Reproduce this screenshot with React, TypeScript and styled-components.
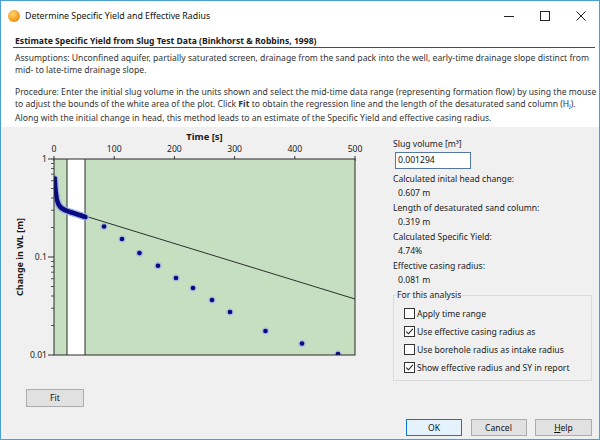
import React from "react";
import styled, { createGlobalStyle } from "styled-components";

const FONT = `"Noto Sans", "Open Sans", "DejaVu Sans", sans-serif`;

const Global = createGlobalStyle`
  html, body { margin: 0; padding: 0; background: #ffffff; }
  body { font-family: ${FONT}; font-size: 8.6px; color: #1b1b1b; }
  * { box-sizing: border-box; }
`;

const Window = styled.div`
  width: 600px;
  height: 440px;
  border: 1px solid #4a9fd5;
  background: #f0f0f0;
  display: flex;
  flex-direction: column;
  overflow: hidden;
`;

const TitleBar = styled.div`
  height: 29px;
  background: #ffffff;
  display: flex;
  align-items: center;
  padding-left: 7px;
  flex-shrink: 0;
`;

const AppIcon = styled.span`
  width: 12px;
  height: 12px;
  border-radius: 50%;
  background: radial-gradient(circle at 40% 35%, #ffd86e, #f39b20 60%, #d7720a);
  margin-right: 5px;
  flex-shrink: 0;
`;

const Title = styled.div`
  flex: 1;
  font-size: 8.8px;
  color: #111;
  white-space: nowrap;
`;

const Controls = styled.div`
  display: flex;
`;

const Ctrl = styled.div`
  width: 36px;
  height: 29px;
  display: flex;
  align-items: center;
  justify-content: center;
`;

const Header = styled.div`
  background: #ffffff;
  padding: 5px 4px 3px 12px;
  flex-shrink: 0;
`;

const Heading = styled.div`
  font-weight: 700;
  line-height: 12px;
  padding-left: 2px;
  border-bottom: 1px solid #4a4a4a;
  white-space: nowrap;
`;

const Para = styled.div<{ $gap: number }>`
  margin-top: ${(p) => p.$gap}px;
  padding-left: 2px;
  color: #333;
`;

const Line = styled.div`
  line-height: 12px;
  white-space: nowrap;
`;

const Main = styled.div`
  display: flex;
  flex-shrink: 0;
`;

const LeftCol = styled.div`
  width: 385px;
  display: flex;
  flex-direction: column;
`;

const ChartSvg = styled.svg`
  display: block;
  width: 385px;
  height: 255px;
`;

const RightCol = styled.div`
  width: 199px;
  margin-left: 7px;
  padding-top: 11px;
  display: flex;
  flex-direction: column;
`;

const FieldLabel = styled.div`
  line-height: 13px;
  white-space: nowrap;
  color: #222;
`;

const FieldValue = styled.div`
  line-height: 14px;
  margin-bottom: 2px;
  padding-left: 5px;
  color: #222;
`;

const Input = styled.div`
  margin-top: 1px;
  margin-bottom: 3.5px;
  margin-left: 2px;
  width: 76px;
  height: 17px;
  border: 1px solid #5578a3;
  background: #ffffff;
  padding-left: 2px;
  line-height: 15px;
  color: #111;
`;

const Group = styled.fieldset`
  margin: 0.5px 0 0 0;
  padding: 0 8px 3px 2px;
  border: 1px solid #dadada;
  border-radius: 0;
`;

const Legend = styled.legend`
  padding: 0 1px;
  line-height: 12px;
  color: #222;
`;

const CheckList = styled.div`
  margin-top: 3.7px;
  padding-left: 8px;
  display: flex;
  flex-direction: column;
`;

const CheckRow = styled.div`
  height: 18px;
  display: flex;
  align-items: center;
  gap: 2px;
  white-space: nowrap;
  color: #222;
`;

const Box = styled.span`
  width: 11px;
  height: 11px;
  border: 1px solid #333;
  background: #fff;
  display: flex;
  align-items: center;
  justify-content: center;
  flex-shrink: 0;
`;

const Button = styled.div<{ $w: number; $primary?: boolean }>`
  width: ${(p) => p.$w}px;
  height: 17px;
  border: 1px solid ${(p) => (p.$primary ? "#0a78d4" : "#adadad")};
  background: ${(p) => (p.$primary ? "#e5f1fb" : "#e1e1e1")};
  display: flex;
  align-items: center;
  justify-content: center;
  color: #111;
  flex-shrink: 0;
`;

const FitWrap = styled.div`
  margin-top: 7px;
  margin-left: 25px;
`;

const Footer = styled.div`
  margin-top: 12px;
  padding-right: 7px;
  display: flex;
  justify-content: flex-end;
  gap: 8.5px;
`;

const Sub = styled.sub`
  font-size: 6px;
  vertical-align: -1px;
`;

const Mnemonic = styled.span`
  text-decoration: underline;
`;

const X0 = 54;
const X1 = 355;
const Y0 = 157;
const Y1 = 353;
const tx = (t: number) => X0 + ((X1 - X0) * t) / 500;
const ly = (v: number) => Y0 + ((Y1 - Y0) / 2) * -Math.log10(v);

const cluster: [number, number][] = [
  [54.8, 176.5], [55, 179], [55.2, 182], [55.4, 185], [55.7, 188], [56, 191], [56.3, 193.5],
  [56.7, 196], [57.2, 198.5], [57.8, 200.5], [58.5, 202.2], [59.3, 203.6], [60.2, 204.8],
  [61.2, 205.8], [62.3, 206.6], [63.5, 207.3], [64.7, 207.9], [66, 208.5], [67.3, 209],
  [68.6, 209.5], [70, 210], [71.4, 210.4], [72.8, 210.9], [74.2, 211.3], [75.6, 211.8],
  [77, 212.2], [78.4, 212.7], [79.8, 213.1], [81.2, 213.6], [82.6, 214.1], [84, 214.6],
  [85.4, 215.1],
];

const later: [number, number][] = [
  [104, 224.5], [122, 237], [139.5, 251], [158, 263.7], [176, 276], [193, 286],
  [212, 298], [230, 310], [265.5, 329], [302, 341.5], [338, 352],
];

const Chart: React.FC = () => {
  const minor: number[] = [];
  [0.01, 0.1].forEach((d) => {
    for (let k = 2; k <= 9; k++) minor.push(ly(d * k));
  });
  const pts = [...cluster, ...later];
  return (
    <ChartSvg viewBox="1 125 385 255">
      <defs>
        <clipPath id="plotclip">
          <rect x={X0} y={Y0} width={X1 - X0} height={Y1 - Y0} />
        </clipPath>
      </defs>
      <text x={204.5} y={138} textAnchor="middle" fontFamily={FONT} fontSize="9.4" fontWeight="700" fill="#1a1a1a">
        Time [s]
      </text>
      {[0, 100, 200, 300, 400, 500].map((t) => (
        <g key={t}>
          <text x={tx(t)} y={150} textAnchor="middle" fontFamily={FONT} fontSize="8.6" fill="#222">
            {t}
          </text>
          <line x1={tx(t)} x2={tx(t)} y1={154} y2={159} stroke="#333" strokeWidth="1" />
        </g>
      ))}
      <text
        transform={`translate(23 ${(Y0 + Y1) / 2}) rotate(-90)`}
        textAnchor="middle"
        fontFamily={FONT}
        fontSize="9"
        fontWeight="700"
        fill="#1a1a1a"
      >
        Change in WL [m]
      </text>
      {[
        [1, "1"],
        [0.1, "0.1"],
        [0.01, "0.01"],
      ].map(([v, s]) => (
        <g key={s as string}>
          <text x={47} y={ly(v as number) + 3} textAnchor="end" fontFamily={FONT} fontSize="8.6" fill="#222">
            {s}
          </text>
          <line x1={48} x2={X0} y1={ly(v as number)} y2={ly(v as number)} stroke="#333" />
        </g>
      ))}
      {minor.map((y, i) => (
        <line key={i} x1={51} x2={X0} y1={y} y2={y} stroke="#555" />
      ))}
      <rect x={X0} y={Y0} width={X1 - X0} height={Y1 - Y0} fill="#c5dfc0" />
      <rect x={67} y={Y0} width={18} height={Y1 - Y0} fill="#ffffff" />
      <line x1={67} x2={67} y1={Y0} y2={Y1} stroke="#2b2b2b" />
      <line x1={85} x2={85} y1={Y0} y2={Y1} stroke="#2b2b2b" />
      <g clipPath="url(#plotclip)">
        <line x1={85} y1={214} x2={355} y2={297} stroke="#2e2e2e" strokeWidth="1" />
        {pts.map(([x, y], i) => (
          <circle key={`h${i}`} cx={x} cy={y} r={3.6} fill="#9fb0e4" opacity={0.75} />
        ))}
        {pts.map(([x, y], i) => (
          <circle key={`p${i}`} cx={x} cy={y} r={2.3} fill="#0a0a80" />
        ))}
      </g>
      <rect x={X0} y={Y0} width={X1 - X0} height={Y1 - Y0} fill="none" stroke="#2b2b2b" strokeWidth="1" />
    </ChartSvg>
  );
};

const Check: React.FC<{ checked?: boolean; label: string }> = ({ checked, label }) => (
  <CheckRow>
    <Box>
      {checked && (
        <svg width="9" height="9" viewBox="0 0 9 9">
          <path d="M1.3 4.6 L3.5 6.8 L7.8 1.8" fill="none" stroke="#222" strokeWidth="1.1" />
        </svg>
      )}
    </Box>
    <span>{label}</span>
  </CheckRow>
);

export default function App() {
  return (
    <>
      <Global />
      <Window>
        <TitleBar>
          <AppIcon />
          <Title>Determine Specific Yield and Effective Radius</Title>
          <Controls>
            <Ctrl>
              <svg width="10" height="10" viewBox="0 0 10 10">
                <line x1="0" y1="5.5" x2="10" y2="5.5" stroke="#222" strokeWidth="1" />
              </svg>
            </Ctrl>
            <Ctrl>
              <svg width="10" height="10" viewBox="0 0 10 10">
                <rect x="0.5" y="0.5" width="9" height="9" fill="none" stroke="#222" strokeWidth="1" />
              </svg>
            </Ctrl>
            <Ctrl>
              <svg width="10" height="10" viewBox="0 0 10 10">
                <path d="M0.5 0.5 L9.5 9.5 M9.5 0.5 L0.5 9.5" stroke="#222" strokeWidth="1" />
              </svg>
            </Ctrl>
          </Controls>
        </TitleBar>
        <Header>
          <Heading>Estimate Specific Yield from Slug Test Data (Binkhorst &amp; Robbins, 1998)</Heading>
          <Para $gap={4}>
            <Line>
              Assumptions: Unconfined aquifer, partially saturated screen, drainage from the sand pack into the well, early-time drainage slope distinct from
            </Line>
            <Line>mid- to late-time drainage slope.</Line>
          </Para>
          <Para $gap={10}>
            <Line>
              Procedure: Enter the initial slug volume in the units shown and select the mid-time data range (representing formation flow) by using the mouse
            </Line>
            <Line>
              to adjust the bounds of the white area of the plot. Click <b>Fit</b> to obtain the regression line and the length of the desaturated sand column (H
              <Sub>j</Sub>).
            </Line>
            <Line>
              Along with the initial change in head, this method leads to an estimate of the Specific Yield and effective casing radius.
            </Line>
          </Para>
        </Header>
        <Main>
          <LeftCol>
            <Chart />
            <FitWrap>
              <Button $w={58} style={{ height: 18 }}>Fit</Button>
            </FitWrap>
          </LeftCol>
          <RightCol>
            <FieldLabel>Slug volume [m³]</FieldLabel>
            <Input>0.001294</Input>
            <FieldLabel>Calculated inital head change:</FieldLabel>
            <FieldValue>0.607 m</FieldValue>
            <FieldLabel>Length of desaturated sand column:</FieldLabel>
            <FieldValue>0.319 m</FieldValue>
            <FieldLabel>Calculated Specific Yield:</FieldLabel>
            <FieldValue>4.74%</FieldValue>
            <FieldLabel>Effective casing radius:</FieldLabel>
            <FieldValue>0.081 m</FieldValue>
            <Group>
              <Legend>For this analysis</Legend>
              <CheckList>
                <Check label="Apply time range" />
                <Check checked label="Use effective casing radius as" />
                <Check label="Use borehole radius as intake radius" />
                <Check checked label="Show effective radius and SY in report" />
              </CheckList>
            </Group>
          </RightCol>
        </Main>
        <Footer>
          <Button $w={56} $primary>OK</Button>
          <Button $w={56}>Cancel</Button>
          <Button $w={57}>
            <span>
              <Mnemonic>H</Mnemonic>elp
            </span>
          </Button>
        </Footer>
      </Window>
    </>
  );
}
